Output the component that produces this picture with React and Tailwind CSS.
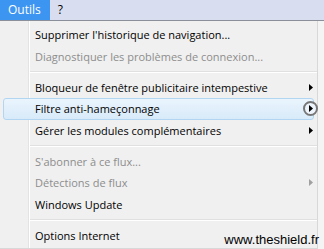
const items = [
  { label: "Supprimer l'historique de navigation..." },
  { label: 'Diagnostiquer les problèmes de connexion...', disabled: true },
  { sep: true },
  { label: 'Bloqueur de fenêtre publicitaire intempestive', sub: true },
  { label: 'Filtre anti-hameçonnage', sub: true, active: true },
  { label: 'Gérer les modules complémentaires', sub: true },
  { sep: true },
  { label: "S'abonner à ce flux...", disabled: true },
  { label: 'Détections de flux', sub: true, disabled: true },
  { label: 'Windows Update' },
  { sep: true },
  { label: 'Options Internet' },
];

const Arrow = ({ disabled }) => (
  <svg width="4" height="7" viewBox="0 0 4 7">
    <path d="M0 0 L4 3.5 L0 7 Z" fill={disabled ? '#a0a0a0' : '#000'} />
  </svg>
);

const App = () => {
  return (
    <div className="relative w-[324px] h-[249px] overflow-hidden bg-[#f4f4f4] text-[11px] leading-none" style={{ fontFamily: '"Segoe UI", "Open Sans", sans-serif' }}>
      <div className="flex h-[21px] items-stretch bg-[#d8deef] border-b border-[#8a8f99]">
        <div className="flex items-center bg-[#3d95f2] pl-[8px] pr-[9px] text-white text-[12px]">Outils</div>
        <div className="flex items-center px-[8px] text-[12px] text-black">?</div>
      </div>
      <div className="relative w-[318px] bg-[#f0f0f0] pt-[3px] pb-[2px] border-r border-b border-[#d8d8d8]">
        <div className="absolute left-[28px] top-0 bottom-0 w-[2px] border-l border-[#e2e3e3] bg-white" />
        {items.map((it, i) =>
          it.sep ? (
            <div key={i} className="ml-[30px] my-[3.75px] h-[2px] border-t border-[#e0e0e0] bg-white" />
          ) : (
            <div key={i} className="relative mx-[3px] h-[21.5px]">
              {it.active && (
                <div className="absolute inset-0 rounded-[3px] border border-[#b2d6f2] bg-gradient-to-b from-[#eaf4fd] to-[#d8eaf9]" />
              )}
              <div className="relative flex h-full items-center pl-[32px] pr-[1px]">
                <span className={it.disabled ? 'text-[#8d8d8d]' : 'text-black'}>{it.label}</span>
                {it.sub && (
                  <span className="ml-auto flex items-center justify-center">
                    {it.active ? (
                      <span className="-mr-[5px] flex h-[15px] w-[15px] items-center justify-center rounded-full border-2 border-[#777] bg-[#eef4fb]">
                        <Arrow />
                      </span>
                    ) : (
                      <Arrow disabled={it.disabled} />
                    )}
                  </span>
                )}
              </div>
            </div>
          )
        )}
      </div>
      <div className="absolute right-[5px] bottom-[3px] text-[13px] leading-none text-black" style={{ fontFamily: '"Liberation Sans", Arial, sans-serif' }}>
        www.theshield.fr
      </div>
    </div>
  );
};

export default App;
